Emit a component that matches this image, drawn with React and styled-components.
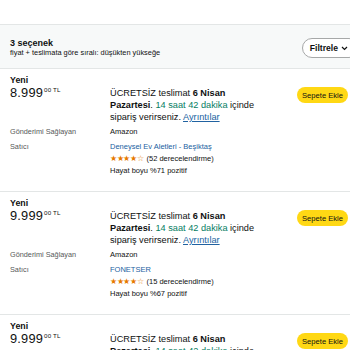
import React from "react";
import styled, { createGlobalStyle } from "styled-components";

const Global = createGlobalStyle`
  html, body { margin: 0; padding: 0; background: #fff; }
  body { font-family: "Liberation Sans", Arial, sans-serif; color: #0f1111; overflow-x: hidden; }
`;

const Page = styled.div`
  width: 350px;
  overflow: hidden;
`;

const TopBar = styled.div`
  height: 24px;
  border-bottom: 1px solid #e3e6e6;
`;

const Header = styled.div`
  display: flex;
  align-items: center;
  justify-content: space-between;
  height: 43px;
  padding-left: 10px;
  background: #f7f9f9;
  border-bottom: 1px solid #e3e6e6;
`;

const HeaderText = styled.div`
  display: flex;
  flex-direction: column;
  padding-top: 3px;
`;

const Title = styled.div`
  font-size: 9px;
  font-weight: 700;
  line-height: 10px;
`;

const Subtitle = styled.div`
  font-size: 7.4px;
  line-height: 10px;
  color: #0f1111;
`;

const FilterPill = styled.button`
  display: flex;
  align-items: center;
  gap: 3px;
  height: 20px;
  margin-top: 3px;
  margin-right: -9px;
  padding: 0 10px 0 7px;
  border: 1px solid #a6a8a8;
  border-radius: 10px;
  background: #fff;
  font-family: inherit;
  font-size: 8.6px;
  font-weight: 700;
  color: #0f1111;
`;

const Offer = styled.div`
  padding: 5px 0 14px 10px;
  border-bottom: 1px solid #e3e6e6;
`;

const Condition = styled.div`
  font-size: 8.8px;
  font-weight: 700;
  line-height: 12px;
  margin-bottom: 1px;
`;

const Grid = styled.div`
  display: grid;
  grid-template-columns: 100px 1fr auto;
  row-gap: 3px;
  align-items: start;
`;

const Price = styled.div`
  font-size: 12.8px;
  line-height: 12px;
  display: flex;
  align-items: flex-start;
  letter-spacing: 0.2px;
`;

const Sup = styled.span`
  font-size: 6.2px;
  line-height: 7px;
  margin-left: 1px;
  letter-spacing: 0.2px;
  margin-top: -1px;
`;

const Delivery = styled.div`
  font-size: 9.2px;
  line-height: 12px;
  width: 148px;
`;

const Green = styled.span`
  color: #067d62;
`;

const Link = styled.a`
  color: #2162a1;
  text-decoration: underline;
`;

const AddButton = styled.button`
  margin-right: 2px;
  height: 16px;
  padding: 0 5px;
  border: none;
  border-radius: 8px;
  background: #ffd814;
  font-family: inherit;
  font-size: 7.6px;
  color: #0f1111;
  white-space: nowrap;
`;

const Label = styled.div`
  font-size: 7.3px;
  line-height: 12px;
  color: #565959;
`;

const Value = styled.div`
  grid-column: 2 / 4;
  font-size: 7.5px;
  line-height: 12px;
`;

const SellerLink = styled.div`
  color: #2162a1;
`;

const Stars = styled.span`
  color: #e67a00;
  font-size: 8.2px;
  letter-spacing: -0.3px;
  margin-right: 3px;
`;

const offers = [
  { price: "8.999", seller: "Deneysel Ev Aletleri - Beşiktaş", ratings: 52, positive: 71 },
  { price: "9.999", seller: "FONETSER", ratings: 15, positive: 67 },
  { price: "9.999", seller: "Kaya Elektronik", ratings: 8, positive: 88 },
];

function OfferRow({ o }) {
  return (
    <Offer>
      <Condition>Yeni</Condition>
      <Grid>
        <Price>
          {o.price}
          <Sup>00 TL</Sup>
        </Price>
        <Delivery>
          ÜCRETSİZ teslimat <b>6 Nisan Pazartesi</b>. <Green>14 saat 42 dakika</Green> içinde
          sipariş verirseniz. <Link>Ayrıntılar</Link>
        </Delivery>
        <AddButton>Sepete Ekle</AddButton>
        <Label>Gönderimi Sağlayan</Label>
        <Value>Amazon</Value>
        <Label>Satıcı</Label>
        <Value>
          <SellerLink>{o.seller}</SellerLink>
          <div>
            <Stars>★★★★☆</Stars>({o.ratings} derecelendirme)
          </div>
          <div>Hayat boyu %{o.positive} pozitif</div>
        </Value>
      </Grid>
    </Offer>
  );
}

export default function App() {
  return (
    <Page>
      <Global />
      <TopBar />
      <Header>
        <HeaderText>
          <Title>3 seçenek</Title>
          <Subtitle>fiyat + teslimata göre sıralı: düşükten yükseğe</Subtitle>
        </HeaderText>
        <FilterPill>
          Filtrele
          <svg width="7" height="5" viewBox="0 0 7 5">
            <path d="M1 1l2.5 2.5L6 1" fill="none" stroke="#0f1111" strokeWidth="1.2" />
          </svg>
        </FilterPill>
      </Header>
      {offers.map((o, i) => (
        <OfferRow key={i} o={o} />
      ))}
    </Page>
  );
}
